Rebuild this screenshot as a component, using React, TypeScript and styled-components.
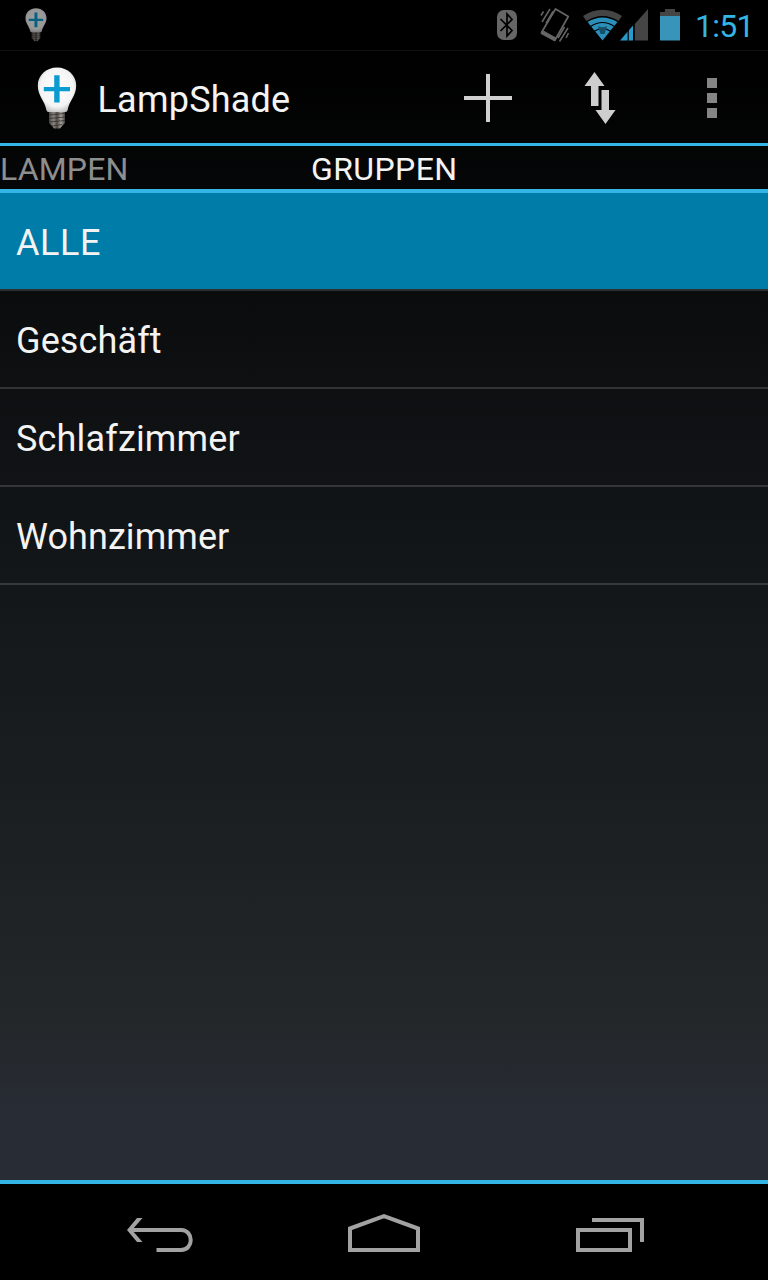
import React from "react";
import styled, { createGlobalStyle } from "styled-components";

const GlobalStyle = createGlobalStyle`
  html, body { margin: 0; padding: 0; background: #000; }
  * { box-sizing: border-box; }
`;

const HOLO_BLUE = "#33b5e5";

const Screen = styled.div`
  width: 768px;
  height: 1280px;
  display: flex;
  flex-direction: column;
  overflow: hidden;
  font-family: Roboto, "Noto Sans", sans-serif;
  color: #f3f3f3;
  background: #000;
`;

const StatusBar = styled.header`
  height: 50px;
  flex: none;
  display: flex;
  align-items: flex-start;
  background: #000;
  padding-left: 25px;
  svg { display: block; flex: none; }
`;

const StatusSpacer = styled.div`
  flex: 1;
`;

const Clock = styled.span`
  width: 78px;
  padding: 7px 0 0 5px;
  font-size: 32px;
  line-height: 38px;
  letter-spacing: -0.7px;
  color: ${HOLO_BLUE};
`;

const AppWindow = styled.main`
  flex: 1;
  display: flex;
  flex-direction: column;
  background: linear-gradient(#000 0%, #0e1012 30%, #14181a 50%, #1b1f21 68%, #222628 84%, #282c34 94%, #282c34 100%);
  border-bottom: 4px solid ${HOLO_BLUE};
`;

const ActionBar = styled.div`
  height: 96px;
  flex: none;
  display: flex;
  align-items: center;
  border-top: 1px solid #101010;
  border-bottom: 3px solid ${HOLO_BLUE};
  padding: 2px 0 0 37px;
  svg { display: block; flex: none; }
`;

const Title = styled.h1`
  margin: 0;
  flex: 1;
  padding: 4px 0 0 20.5px;
  font-size: 36px;
  line-height: 42px;
  font-weight: 400;
  letter-spacing: 0.22px;
`;

const Action = styled.button`
  width: 112px;
  height: 90px;
  border: 0;
  padding: 0;
  background: none;
  display: flex;
  align-items: center;
  justify-content: center;
`;

const TabStrip = styled.nav`
  height: 47px;
  flex: none;
  display: flex;
  border-bottom: 4px solid ${HOLO_BLUE};
`;

const Tab = styled.div<{ $active?: boolean; $width: number; $spacing?: number }>`
  width: ${(p) => p.$width}px;
  padding-top: 4px;
  font-size: 32px;
  line-height: 38px;
  letter-spacing: ${(p) => p.$spacing ?? 0}px;
  color: ${(p) => (p.$active ? "#f3f3f3" : "#8d8e8e")};
`;

const List = styled.ul`
  list-style: none;
  margin: 0;
  padding: 0;
`;

const Row = styled.li<{ $selected?: boolean; $spacing: number }>`
  height: 98px;
  padding: 29px 16px 0;
  font-size: 36px;
  line-height: 42px;
  letter-spacing: ${(p) => p.$spacing}px;
  border-bottom: 2px solid rgba(255, 255, 255, 0.15);
  background: ${(p) => (p.$selected ? "#007ca8" : "transparent")};
  background-clip: padding-box;
`;

const NavBar = styled.footer`
  height: 96px;
  flex: none;
  display: flex;
  justify-content: center;
  background: #000;
`;

const NavButton = styled.button`
  width: 224px;
  height: 96px;
  border: 0;
  padding: 0;
  background: none;
  svg { display: block; }
`;

function Bulb({ width, height, dim, id }: { width: number; height: number; dim?: boolean; id: string }) {
  return (
    <svg width={width} height={height} viewBox="0 0 40 63" preserveAspectRatio="none" opacity={dim ? 0.62 : 1}>
      <defs>
        <radialGradient id={`${id}-glass`} cx="0.5" cy="0.45" r="0.6">
          <stop offset="0" stopColor="#fff" />
          <stop offset="0.72" stopColor="#f4f4f4" />
          <stop offset="1" stopColor="#b8b8b8" />
        </radialGradient>
        <linearGradient id={`${id}-base`}>
          <stop offset="0" stopColor="#4a4744" />
          <stop offset="0.3" stopColor="#8a8580" />
          <stop offset="0.5" stopColor="#4b4845" />
          <stop offset="0.75" stopColor="#a5a09b" />
          <stop offset="1" stopColor="#45423f" />
        </linearGradient>
      </defs>
      <path d="M12 44H28V56L25 59L23 61.5H17L15 59L12 56Z" fill={`url(#${id}-base)`} />
      <path d="M12 48L28 46.5M12 51.5L28 50M12 55L28 53.5M15 59L25 57.5" stroke="#33302e" strokeWidth="0.8" />
      <path d="M20 .5C9 .5 .8 8.5 .8 18.5C.8 29 7.8 33.500 9.500 43.500Q10 45 12 45H28Q30 45 30.500 43.500C32.200 33.500 39.200 29 39.200 18.500C39.200 8.500 31 .5 20 .5Z" fill={`url(#${id}-glass)`} />
      <path d="M6.800 20H33V24.200H6.800ZM17.200 8.200H22.600V35.500H17.200Z" fill="#0a9bd0" />
    </svg>
  );
}

function StatusIcons() {
  return (
    <svg width="200" height="50" viewBox="490 0 200 50">
      <rect x="497" y="10" width="20" height="30" rx="7" fill="#666" />
      <path d="M500.500 19L512 30.500L507 36V14L512 19.500L500.500 31" fill="none" stroke="#000" strokeWidth="1.700" />
      <g fill="none" stroke="#666">
        <path d="M555.500 9L568.300 16.500L555 40L541.500 32.500Z" strokeWidth="1.700" strokeLinejoin="round" />
        <path d="M542.500 30.500L556 38L554.800 41L541 33.500Z" fill="#666" />
        <path d="M541 15.500L543.500 11.500M542 22L550 9M546 23.500L553 11.500M568.500 33L566 38M568 28L559.500 41.500M564.500 27L558 38" strokeWidth="1.500" />
      </g>
      <path d="M583 16Q602.500 3.500 622 16L618.500 21Q602.500 11 586.500 21Z" fill="#454545" />
      <path d="M587.500 22Q602.500 13 617.500 22L602.500 40.500Z" fill="#2a8fb9" />
      <path d="M590.500 26.500Q602.500 18.500 614.500 26.500M594 31.500Q602.500 25.500 611 31.500" fill="none" stroke="#000" strokeWidth="1.200" />
      <path d="M598 26Q602.500 28.500 607 26L604.500 34H600.500Z" fill="#155068" />
      <path d="M620 40.500L633 25.500V40.500Z" fill="#2a9acb" />
      <path d="M628.200 28V41" stroke="#000" strokeWidth="1.200" />
      <path d="M634.800 24L648 9V40.500H634.800Z" fill="#454545" />
      <path d="M665 9H675V12H680V16H660V12H665Z" fill="#454545" />
      <rect x="660" y="16" width="20" height="24.500" fill="#3994b9" />
    </svg>
  );
}

const groups = [
  { name: "ALLE", spacing: 0.6 },
  { name: "Geschäft", spacing: 0.12 },
  { name: "Schlafzimmer", spacing: 0.17 },
  { name: "Wohnzimmer", spacing: 0.07 },
];

export default function App() {
  return (
    <>
      <GlobalStyle />
      <Screen>
        <StatusBar>
          <svg width="22" height="50" viewBox="0 0 22 50">
            <g transform="translate(0 8)">
              <Bulb id="notice" width={22} height={34} dim />
            </g>
          </svg>
          <StatusSpacer />
          <StatusIcons />
          <Clock>1:51</Clock>
        </StatusBar>
        <AppWindow>
          <ActionBar>
            <Bulb id="logo" width={40} height={63} />
            <Title>LampShade</Title>
            <Action aria-label="Add">
              <svg width="48" height="48" viewBox="0 0 48 48">
                <path d="M24 0V48M0 24H48" stroke="#d0d0d0" strokeWidth="4" />
              </svg>
            </Action>
            <Action aria-label="Transfer">
              <svg width="32" height="52" viewBox="0 0 32 52">
                <path d="M10.500 0L20.500 14H14.500V34H7V14H.5ZM17.500 18H25V38H31.500L21.500 52L11.500 38H17.500Z" fill="#cecece" />
              </svg>
            </Action>
            <Action aria-label="More">
              <svg width="10" height="40" viewBox="0 0 10 40">
                <path d="M0 0H10V10H0ZM0 15H10V25H0ZM0 30H10V40H0Z" fill="#858585" />
              </svg>
            </Action>
          </ActionBar>
          <TabStrip>
            <Tab $width={311} $spacing={0.15}>LAMPEN</Tab>
            <Tab $width={457} $spacing={0.4} $active>GRUPPEN</Tab>
          </TabStrip>
          <List>
            {groups.map((group, i) => (
              <Row key={group.name} $selected={i === 0} $spacing={group.spacing}>{group.name}</Row>
            ))}
          </List>
        </AppWindow>
        <NavBar>
          <NavButton aria-label="Back">
            <svg width="224" height="96" viewBox="48 1184 224 96" fill="none" stroke="#a2a2a2" strokeWidth="4">
              <path d="M130 1230H181C194 1230 194 1250 181 1250H156.500" />
              <path d="M137 1218H142.500L132 1230L142.500 1242H137L127 1230Z" fill="#a2a2a2" stroke="none" />
            </svg>
          </NavButton>
          <NavButton aria-label="Home">
            <svg width="224" height="96" viewBox="272 1184 224 96" fill="none" stroke="#a2a2a2" strokeWidth="4">
              <path d="M350 1250V1228.500L384 1216.200L418 1228.500V1250Z" />
            </svg>
          </NavButton>
          <NavButton aria-label="Recent apps">
            <svg width="224" height="96" viewBox="496 1184 224 96" fill="none" stroke="#a2a2a2" strokeWidth="4">
              <path d="M578 1230H630V1250H578ZM592 1220H642V1242" />
            </svg>
          </NavButton>
        </NavBar>
      </Screen>
    </>
  );
}
